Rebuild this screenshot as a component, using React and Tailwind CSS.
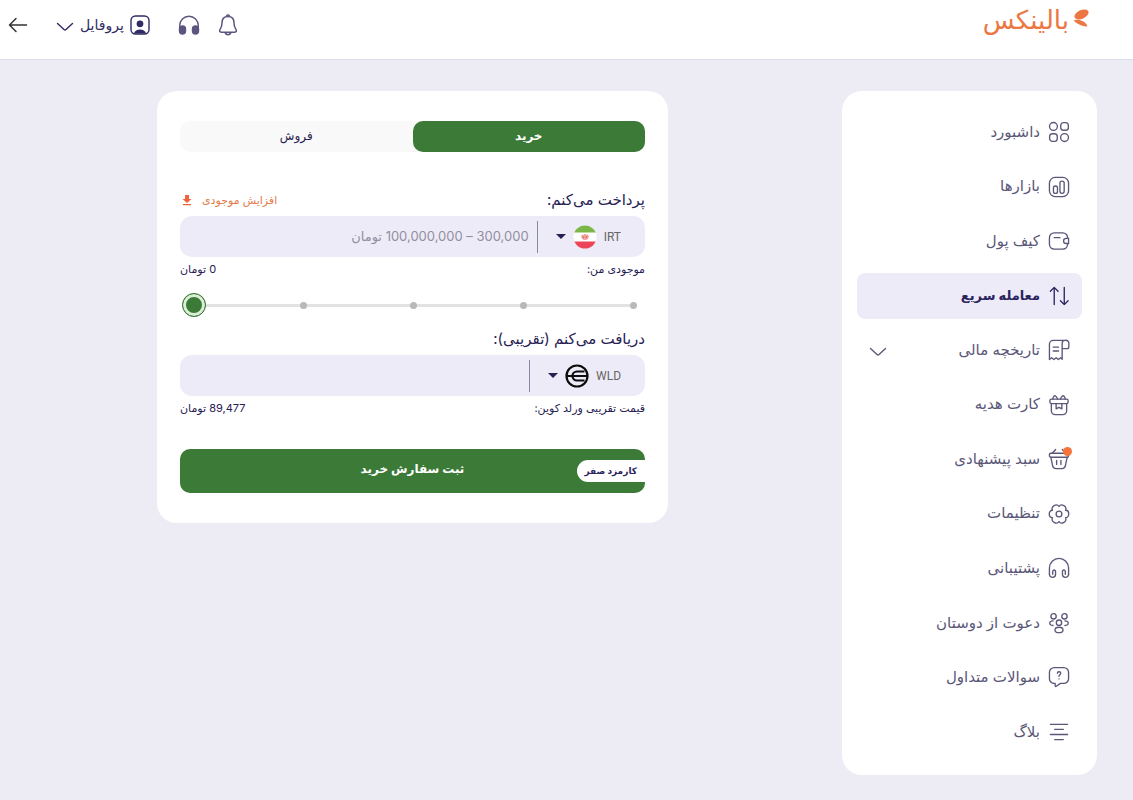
import { useState } from 'react'

const iconProps = {
  width: 22,
  height: 22,
  viewBox: '-0.5 -0.5 23 23',
  fill: 'none',
  stroke: 'currentColor',
  strokeWidth: 1.4,
  strokeLinecap: 'round',
  strokeLinejoin: 'round',
  'aria-hidden': true,
  className: 'shrink-0',
}

const DashboardIcon = () => (
  <svg {...iconProps}>
    <circle cx="5.2" cy="5.2" r="4.1" />
    <rect x="12.800" y="1.200" width="8" height="8" rx="3" />
    <rect x="1.200" y="12.800" width="8" height="8" rx="3" />
    <circle cx="16.800" cy="16.800" r="4.100" />
  </svg>
)

const MarketsIcon = () => (
  <svg {...iconProps}>
    <rect x="1" y="1" width="20" height="20" rx="6" />
    <rect x="5.200" y="10" width="4.200" height="7.600" rx="2" />
    <rect x="12" y="4.800" width="4.400" height="12.800" rx="2.100" />
  </svg>
)

const WalletIcon = () => (
  <svg {...iconProps}>
    <path d="M20 8V7.500a5 5 0 0 0-5-5H6a5 5 0 0 0-5 5v7a5 5 0 0 0 5 5h9a5 5 0 0 0 5-5V14" />
    <path d="M21 8.200h-2.500a2.700 2.700 0 0 0 0 5.400H21z" />
    <path d="M6 7.500h6" />
  </svg>
)

const TradeIcon = () => (
  <svg {...iconProps}>
    <path d="M6 20V2M2 6l4-4 4 4M16.500 2v18M12.500 16l4 4 4-4" />
  </svg>
)

const HistoryIcon = () => (
  <svg {...iconProps}>
    <path d="M18 1H5a4 4 0 0 0-4 4v16l2.300-2 2.400 2 2.300-2 2.300 2 2.400-2 1.600 1.600V4a3 3 0 0 1 3-3 3 3 0 0 1 4 3v3.500a2 2 0 0 1-2 2h-5" />
    <path d="M5 8h5.500M5 12h5.500" />
  </svg>
)

const GiftIcon = () => (
  <svg {...iconProps}>
    <rect x="1.500" y="4.800" width="19" height="4.700" rx="1.600" />
    <path d="M3 9.500V17a4 4 0 0 0 4 4h8a4 4 0 0 0 4-4V9.500" />
    <path d="M8 9.500V15l3-1.600 3 1.600V9.500" />
    <path d="M4.500 4.800C5 2.500 6 .8 7.200 1.500s1.800 1.500 2.300 3.300M17.500 4.800C17 2.500 16 .8 14.800 1.500s-1.800 1.500-2.300 3.300" />
  </svg>
)

const BasketIcon = () => (
  <svg {...iconProps}>
    <rect x="1" y="5" width="20" height="4.200" rx="1.600" />
    <path d="M2.500 9.200 4.300 18a3.600 3.600 0 0 0 3.600 3h6.200a3.600 3.600 0 0 0 3.600-3l1.800-8.800" />
    <path d="M8.500 12.500v4.200M13 12.500v4.200M7.500 1 4 5M14.500 1 18 5" />
  </svg>
)

const SettingsIcon = () => (
  <svg {...iconProps}>
    <circle cx="11" cy="11" r="3" />
    <path d="M17.800 7.100C22.300 7.100 22.300 14.900 17.800 14.900C20.050 18.800 13.250 22.700 11 18.800C8.750 22.700 1.950 18.800 4.200 14.900C-.3 14.900-.3 7.100 4.200 7.100C1.950 3.200 8.750-.7 11 3.200C13.250-.7 20.050 3.200 17.800 7.100z" />
  </svg>
)

const SupportIcon = () => (
  <svg {...iconProps}>
    <path d="M1 17.500V11a10 10 0 0 1 20 0v6.500" />
    <path d="M1 17.500c0 4.500 6.400 4.200 6.400 0V15c0-2.600-3-2.400-3 0v2.500M21 17.500c0 4.500-6.400 4.200-6.400 0V15c0-2.600 3-2.400 3 0v2.500" />
  </svg>
)

const FriendsIcon = () => (
  <svg {...iconProps}>
    <circle cx="5.300" cy="4" r="2.800" />
    <circle cx="16.700" cy="4" r="2.800" />
    <circle cx="11" cy="10.700" r="2.800" />
    <ellipse cx="11" cy="18.200" rx="4.200" ry="2.800" />
    <path d="M4.800 8.800C.2 8.600.2 13.800 4.800 13.600M17.200 8.800c4.600-.2 4.600 5 0 4.800" />
  </svg>
)

const FaqIcon = () => (
  <svg {...iconProps}>
    <path d="M6 1.200h10a5 5 0 0 1 5 5v6.500a5 5 0 0 1-5 5h-3.500L8.200 20.700c-.7.500-1.200.2-1.200-.5v-2.500H6a5 5 0 0 1-5-5V6.200a5 5 0 0 1 5-5z" />
    <path d="M9.300 7.200c0-2.300 3.500-2.300 3.500 0 0 1.500-1.800 1.500-1.800 3M11 12.900v.1" />
  </svg>
)

const BlogIcon = () => (
  <svg {...iconProps}>
    <path d="M2 3h18M6.500 8.300h9M2 13.600h18M6.500 18.900h9" />
  </svg>
)

const ChevronDown = () => (
  <svg width="18" height="10" viewBox="0 0 18 10" fill="none" stroke="currentColor" strokeWidth="1.400" strokeLinecap="round" strokeLinejoin="round" className="mt-1 shrink-0" aria-hidden="true">
    <path d="M1.500 1.500 8 7.500a1.500 1.500 0 0 0 2 0l6.500-6" />
  </svg>
)

const Caret = () => (
  <svg width="10" height="5" viewBox="0 0 10 5" fill="currentColor" className="text-[#272153]" aria-hidden="true">
    <path d="M0 0h10L5 5z" />
  </svg>
)

const IranFlag = () => (
  <svg width="24" height="24" viewBox="0 0 24 24" aria-hidden="true">
    <clipPath id="flag">
      <circle cx="12" cy="12" r="11.500" />
    </clipPath>
    <g clipPath="url(#flag)">
      <path fill="#fff" d="M0 0h24v24H0z" />
      <path fill="#7ab648" d="M0 0h24v7.500H0z" />
      <path fill="#ee4459" d="M0 16.500h24V24H0z" />
    </g>
    <path d="M10 9.600a2.600 2.600 0 0 0 1 4.600M14 9.600a2.600 2.600 0 0 1-1 4.600M12 9v6M10.700 10.500v2.800M13.300 10.500v2.800" fill="none" stroke="#e2574c" strokeWidth="1" />
  </svg>
)

const WorldcoinIcon = () => (
  <svg width="24" height="24" viewBox="0 0 24 24" fill="none" stroke="#0c0c0c" strokeWidth="2.200" aria-hidden="true">
    <circle cx="12" cy="12" r="10.500" />
    <path d="M1.500 12h21M19.500 7.500H12a4.500 4.500 0 0 0 0 9h7.500" />
  </svg>
)

const menu = [
  { label: 'داشبورد', icon: DashboardIcon },
  { label: 'بازارها', icon: MarketsIcon },
  { label: 'کیف پول', icon: WalletIcon },
  { label: 'معامله سریع', icon: TradeIcon, active: true },
  { label: 'تاریخچه مالی', icon: HistoryIcon, expandable: true },
  { label: 'کارت هدیه', icon: GiftIcon },
  { label: 'سبد پیشنهادی', icon: BasketIcon, badge: true },
  { label: 'تنظیمات', icon: SettingsIcon },
  { label: 'پشتیبانی', icon: SupportIcon },
  { label: 'دعوت از دوستان', icon: FriendsIcon },
  { label: 'سوالات متداول', icon: FaqIcon },
  { label: 'بلاگ', icon: BlogIcon },
]

function Header() {
  return (
    <header className="flex h-[60px] items-start justify-between border-b border-[#dddcec] bg-white pr-11 pl-2">
      <a href="#" className="mt-1 flex items-start gap-1 text-[#ed7742]">
        <svg width="16" height="20" viewBox="0 0 16 20" fill="currentColor" className="mt-1" aria-hidden="true">
          <ellipse cx="8.500" cy="6.500" rx="7.500" ry="4.300" transform="rotate(-24 8.500 6.500)" />
          <path d="M.5 12.500c4-1.500 10-.5 13.500 4.500.6 1-.2 1.800-1.500 1.500C8 17.800 4 16 .5 12.500z" />
        </svg>
        <span className="text-[26px] leading-8">بالینکس</span>
      </a>
      <div className="flex h-[50px] items-center text-[#5a5680]">
        <button type="button" aria-label="اعلان‌ها">
          <svg width="20" height="22" viewBox="0 0 20 22" fill="none" stroke="currentColor" strokeWidth="1.500" strokeLinejoin="round" aria-hidden="true">
            <path d="M10 2.500c-4 0-6 2.800-6 6.500 0 3.500-.8 4.500-2 6.500-.9 1.600-.3 2.700 1.300 2.700h13.400c1.600 0 2.200-1.100 1.300-2.700-1.200-2-2-3-2-6.500 0-3.700-2-6.500-6-6.500z" />
            <path d="M8.500 2.500c0-2 3-2 3 0M7 18.300c.8 3.200 5.200 3.200 6 0" />
          </svg>
        </button>
        <button type="button" aria-label="پشتیبانی" className="mr-[18px]">
          <svg width="22" height="22" viewBox="0 0 22 22" fill="none" stroke="currentColor" strokeWidth="1.400" aria-hidden="true">
            <path d="M1.700 16v-4.500a9.300 9.300 0 0 1 18.600 0V16" />
            <rect x="1.500" y="12" width="6" height="8" rx="3" fill="currentColor" />
            <rect x="14.500" y="12" width="6" height="8" rx="3" fill="currentColor" />
          </svg>
        </button>
        <button type="button" className="mr-7 flex items-center gap-1.5 text-sm text-[#2f2a63]">
          <svg width="20" height="20" viewBox="0 0 20 20" fill="currentColor" aria-hidden="true">
            <rect x="1" y="1" width="18" height="18" rx="4.500" fill="none" stroke="currentColor" strokeWidth="1.400" />
            <circle cx="10" cy="8.800" r="3.400" />
            <path d="M4 18.500c1-5.500 11-5.500 12 0z" />
          </svg>
          <span>پروفایل</span>
          <ChevronDown />
        </button>
        <button type="button" aria-label="بازگشت" className="mr-7 text-[#333]">
          <svg width="20" height="16" viewBox="0 0 20 16" fill="none" stroke="currentColor" strokeWidth="1.500" strokeLinecap="round" strokeLinejoin="round" aria-hidden="true">
            <path d="M18.500 8h-17M8 1.500 1.500 8 8 14.500" />
          </svg>
        </button>
      </div>
    </header>
  )
}

function Sidebar() {
  return (
    <aside className="w-[255px] shrink-0 rounded-[20px] bg-white px-[15px] pt-[18px] pb-5">
      <nav className="flex min-h-[646px] flex-col justify-between">
        {menu.map(({ label, icon: Icon, active, expandable, badge }) => (
          <a
            key={label}
            href="#"
            className={`flex h-[46px] items-center gap-2 rounded-lg px-3 ${
              active ? 'bg-[#edebf7] text-[13px] font-bold text-[#2b2460]' : 'text-[15px] text-[#5a5778]'
            }`}
          >
            <span className="relative">
              <Icon />
              {badge && <span className="absolute -top-px -right-0.5 size-[9px] rounded-full bg-[#f4743b]" />}
            </span>
            <span className="grow">{label}</span>
            {expandable && <ChevronDown />}
          </a>
        ))}
      </nav>
    </aside>
  )
}

function AmountField({ label, currency, icon: Icon, placeholder }) {
  return (
    <div className="flex h-[41px] items-center rounded-xl bg-[#edebf7] py-1 pr-6 pl-3">
      <div className="flex h-8 items-center gap-[7px] border-l border-[#8a88a0] pl-[18px]">
        <select aria-label={`ارز ${label}`} className="field-sizing-content appearance-none bg-transparent font-[Roboto] text-xs text-[#666]">
          <option>{currency}</option>
        </select>
        <Icon />
        <Caret />
      </div>
      <input
        type="text"
        aria-label={label}
        placeholder={placeholder}
        className="min-w-0 grow bg-transparent px-2 text-[13px] text-[#2b2460] outline-none placeholder:text-[#918fa0]"
      />
    </div>
  )
}

function AmountSlider() {
  const [percent, setPercent] = useState(0)
  return (
    <div className="relative ml-0.5 h-6">
      <div className="absolute inset-x-3 top-[11px] h-[3px] bg-[#e2e2e2]" />
      <div className="absolute inset-x-2 top-2 flex h-2 items-center justify-between">
        {[0, 25, 50, 75, 100].map((mark) => (
          <span key={mark} className="size-[7px] rounded-full bg-[#b9b9b9]" />
        ))}
      </div>
      <input
        type="range"
        dir="ltr"
        aria-label="درصد موجودی"
        value={percent}
        step={25}
        onChange={(e) => setPercent(Number(e.target.value))}
        className="absolute inset-0 w-full appearance-none bg-transparent [&::-webkit-slider-thumb]:size-6 [&::-webkit-slider-thumb]:appearance-none [&::-webkit-slider-thumb]:rounded-full [&::-webkit-slider-thumb]:border [&::-webkit-slider-thumb]:border-[#3c7a37] [&::-webkit-slider-thumb]:bg-[#3c7a37] [&::-webkit-slider-thumb]:shadow-[inset_0_0_0_3px_#dcedd9]"
      />
    </div>
  )
}

function TradeCard() {
  return (
    <form className="w-full max-w-[511px] rounded-[20px] bg-white px-[23px] py-[30px] text-[#272153]">
      <div className="flex h-[31px] rounded-[10px] bg-[#f9f9f9] text-xs">
        <button type="button" className="flex-1 rounded-[10px] bg-[#3c7a37] pb-0.5 font-bold text-white">خرید</button>
        <button type="button" className="flex-1 rounded-[10px] pb-0.5">فروش</button>
      </div>

      <div className="mt-8 flex h-8 items-center justify-between">
        <span className="text-[15px]">پرداخت می‌کنم:</span>
        <a href="#" className="flex items-center gap-2 text-[11px] text-[#e57a4b]">
          افزایش موجودی
          <svg width="14" height="12" viewBox="0 0 14 12" fill="#f0643c" aria-hidden="true">
            <path d="M5 1h4v4h2.500L7 9 2.500 5H5zM3 10h8v1.200H3z" />
          </svg>
        </a>
      </div>
      <AmountField label="پرداخت می‌کنم" currency="IRT" icon={IranFlag} placeholder="300,000 – 100,000,000 تومان" />
      <div className="flex h-6 items-center justify-between text-[11px]">
        <span>موجودی من:</span>
        <span>0 تومان</span>
      </div>

      <div className="mt-3">
        <AmountSlider />
      </div>

      <div className="mt-1.5 flex h-8 items-center text-[15px]">دریافت می‌کنم (تقریبی):</div>
      <AmountField label="دریافت می‌کنم" currency="WLD" icon={WorldcoinIcon} />
      <div className="flex h-6 items-center justify-between text-[11px]">
        <span>قیمت تقریبی ورلد کوین:</span>
        <span>89,477 تومان</span>
      </div>

      <button type="submit" className="relative mt-[29px] h-11 w-full overflow-hidden rounded-[10px] bg-[#3c7a37] pb-1 text-xs font-bold text-white">
        ثبت سفارش خرید
        <span className="absolute top-[11px] right-0 rounded-l-full bg-white px-2 text-[9px] leading-[22px] text-[#2b2460]">
          کارمزد صفر
        </span>
      </button>
    </form>
  )
}

export default function App() {
  return (
    <div dir="rtl" className="min-h-screen bg-[#edecf4] font-['Inter','DejaVu_Sans',sans-serif]">
      <Header />
      <div className="flex items-start gap-[17px] pt-[31px] pr-9 pb-6">
        <Sidebar />
        <main className="flex grow justify-center">
          <TradeCard />
        </main>
      </div>
    </div>
  )
}
